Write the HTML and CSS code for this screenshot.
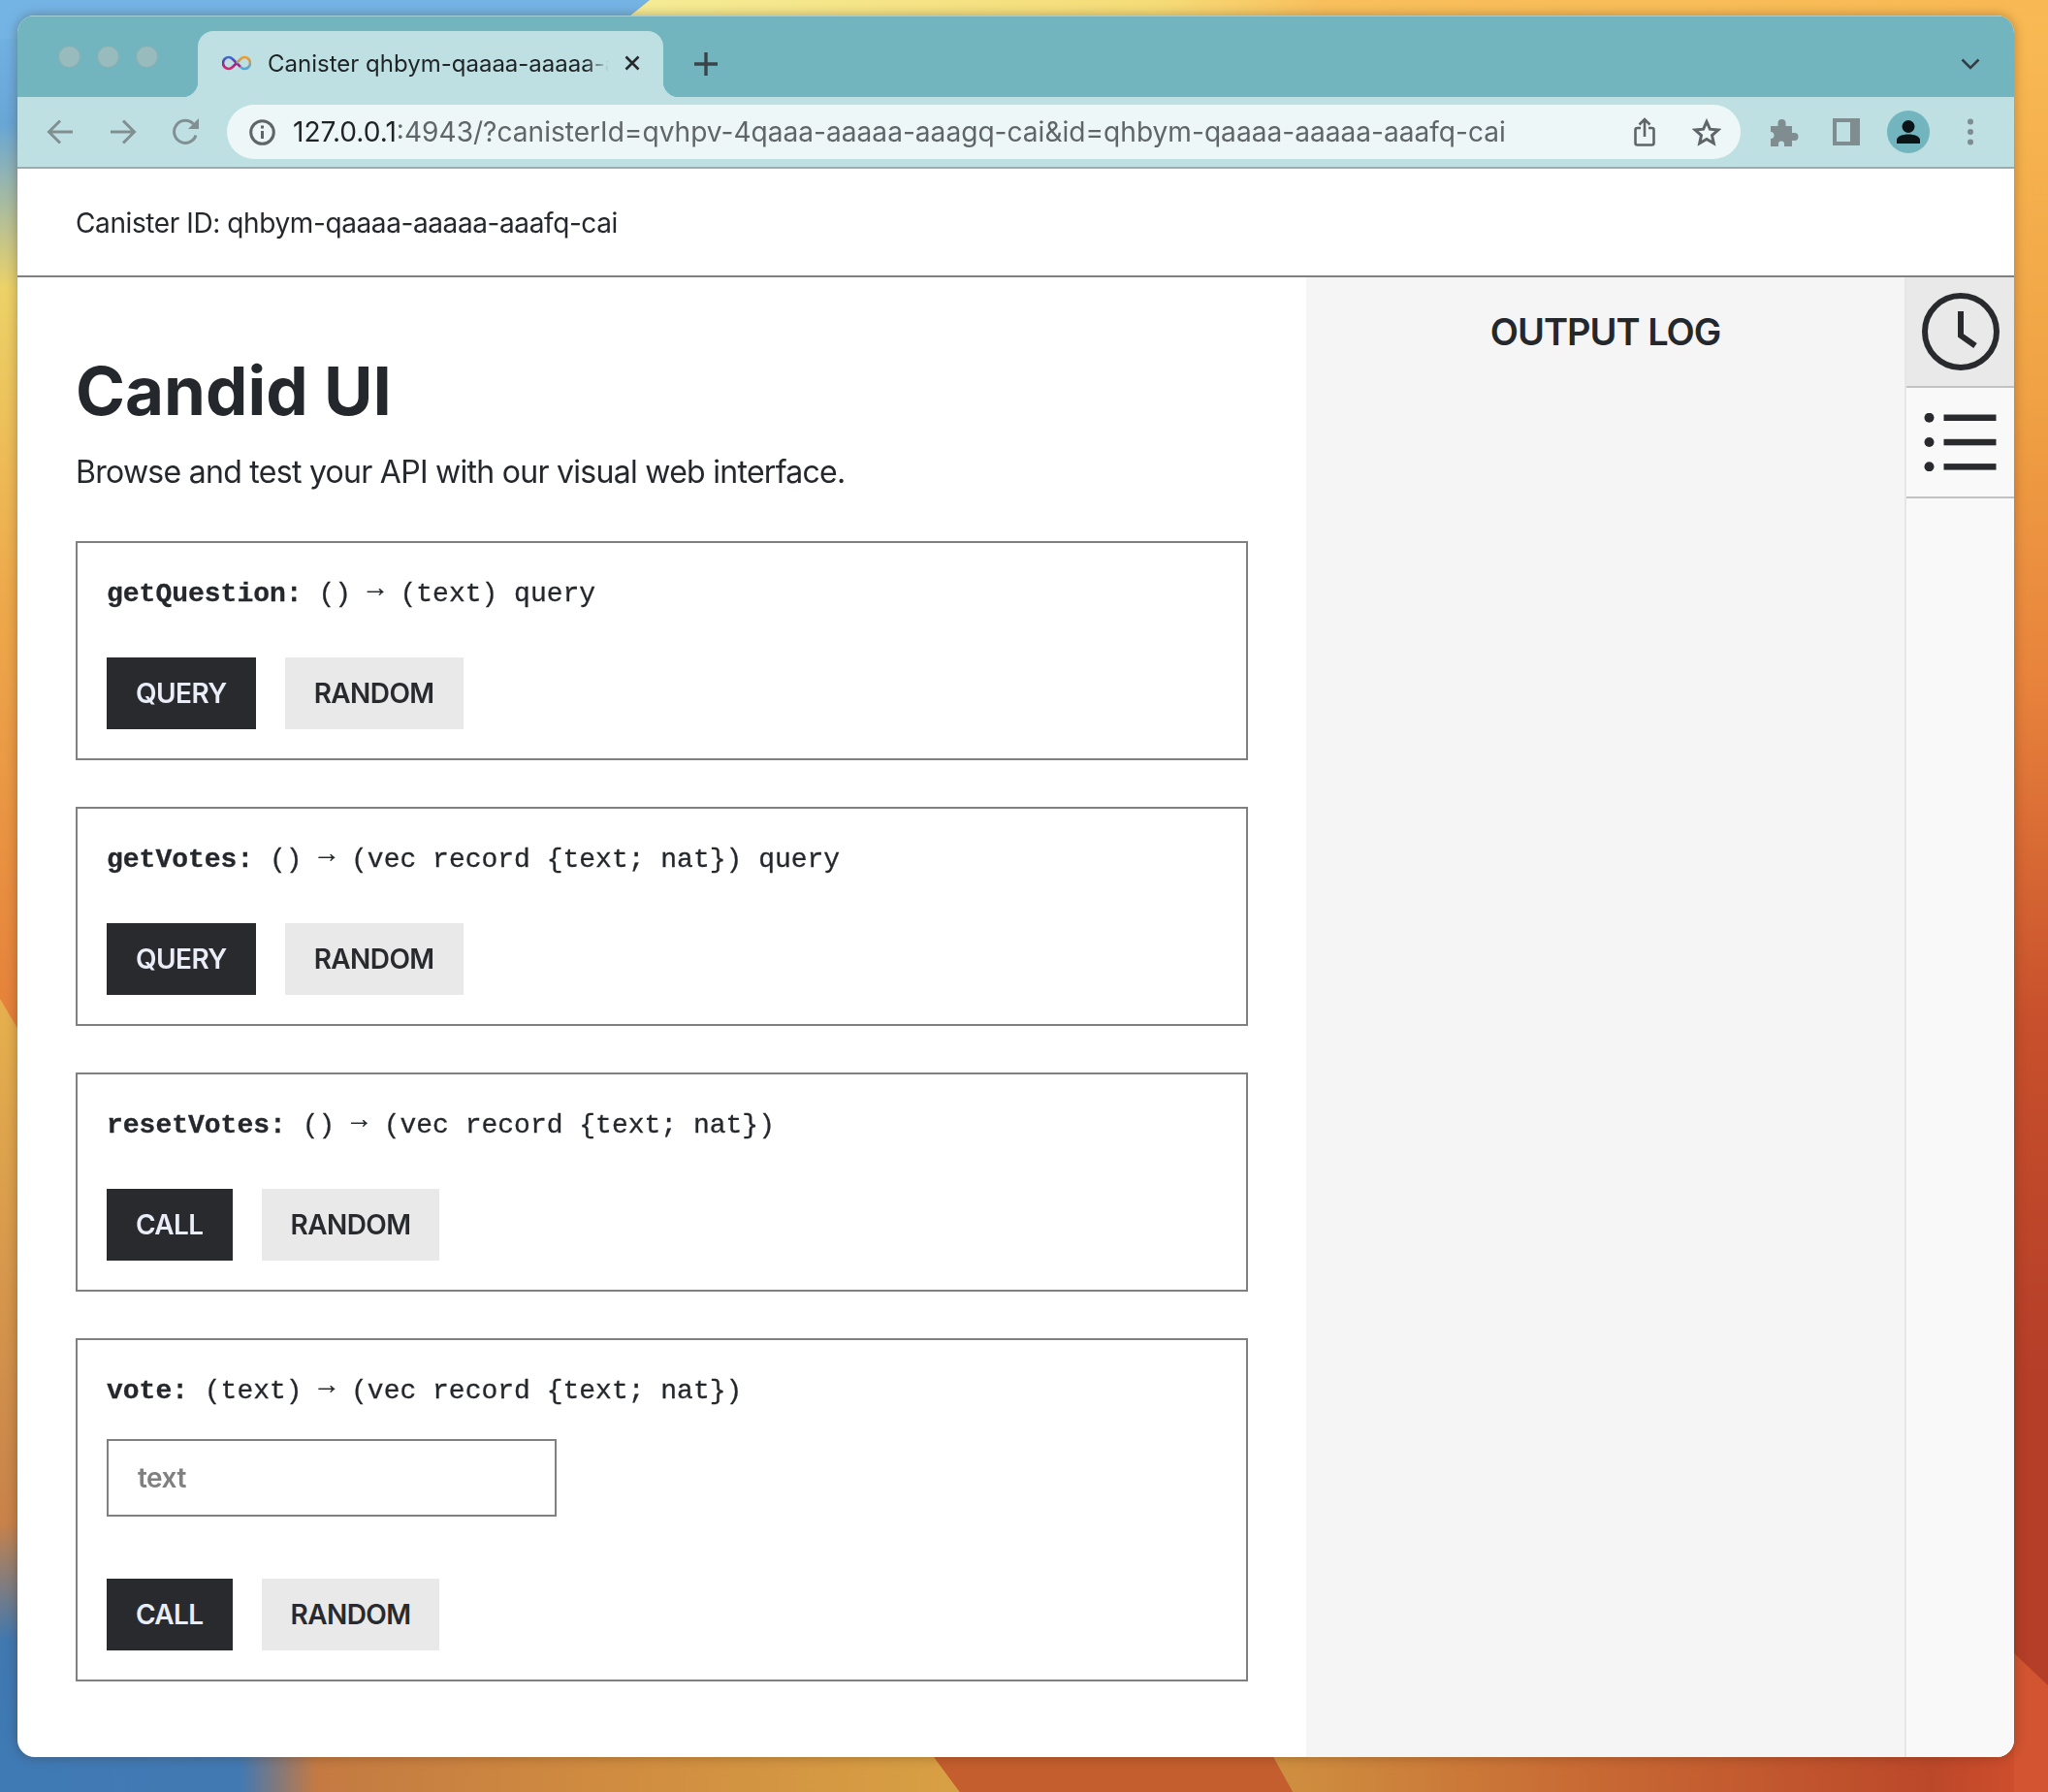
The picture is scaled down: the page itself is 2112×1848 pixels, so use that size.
FILE: index.html
```html
<!DOCTYPE html>
<html lang="en">

<head>
  <meta charset="UTF-8">
  <title>Candid UI</title>
  <link rel="stylesheet" href="styles.css">
</head>

<body>
  <svg class="wallpaper" width="2112" height="1848" viewBox="0 0 2112 1848">
    <defs>
      <linearGradient id="wpRight" gradientUnits="userSpaceOnUse" x1="0" y1="0" x2="0" y2="1848">
        <stop offset="0" stop-color="#f9bb55" />
        <stop offset="0.22" stop-color="#f0a244" />
        <stop offset="0.38" stop-color="#e8833c" />
        <stop offset="0.57" stop-color="#c8502c" />
        <stop offset="0.77" stop-color="#b43e28" />
        <stop offset="1" stop-color="#b43e28" />
      </linearGradient>
      <linearGradient id="wpTop" gradientUnits="userSpaceOnUse" x1="650" y1="0" x2="2112" y2="0">
        <stop offset="0" stop-color="#f5ec96" />
        <stop offset="0.37" stop-color="#f5dc78" />
        <stop offset="0.49" stop-color="#f8bf5c" />
        <stop offset="1" stop-color="#f8b954" />
      </linearGradient>
      <linearGradient id="wpLeftUp" gradientUnits="userSpaceOnUse" x1="0" y1="0" x2="0" y2="1062">
        <stop offset="0" stop-color="#74b6e6" />
        <stop offset="0.12" stop-color="#68a6d6" />
        <stop offset="0.28" stop-color="#ecd268" />
        <stop offset="0.57" stop-color="#eeaa4c" />
        <stop offset="1" stop-color="#e5803a" />
      </linearGradient>
      <linearGradient id="wpLeftDown" gradientUnits="userSpaceOnUse" x1="0" y1="1030" x2="0" y2="1848">
        <stop offset="0" stop-color="#e6b04e" />
        <stop offset="0.66" stop-color="#c8824a" />
        <stop offset="0.81" stop-color="#4078b0" />
        <stop offset="1" stop-color="#3f7ab5" />
      </linearGradient>
      <linearGradient id="wpBottomA" gradientUnits="userSpaceOnUse" x1="0" y1="0" x2="990" y2="0">
        <stop offset="0" stop-color="#3f7ab5" />
        <stop offset="0.25" stop-color="#4279b2" />
        <stop offset="0.33" stop-color="#c47a42" />
        <stop offset="0.6" stop-color="#cf8a40" />
        <stop offset="1" stop-color="#d8a044" />
      </linearGradient>
      <linearGradient id="wpBottomC" gradientUnits="userSpaceOnUse" x1="1313" y1="0" x2="2112" y2="0">
        <stop offset="0" stop-color="#cf9040" />
        <stop offset="0.4" stop-color="#c86a34" />
        <stop offset="0.85" stop-color="#bc482a" />
        <stop offset="1" stop-color="#d4502e" />
      </linearGradient>
    </defs>
    <rect width="2112" height="1848" fill="url(#wpRight)" />
    <polygon points="670,0 2112,0 2112,16 650,16" fill="url(#wpTop)" />
    <rect x="0" y="0" width="40" height="1062" fill="url(#wpLeftUp)" />
    <polygon points="0,0 670,0 650,16 40,16 40,40 0,40" fill="#74b4e4" />
    <polygon points="0,1030 40,1098 40,1848 0,1848" fill="url(#wpLeftDown)" />
    <polygon points="0,1790 947,1790 990,1848 0,1848" fill="url(#wpBottomA)" />
    <polygon points="947,1790 1301,1790 1333,1848 990,1848" fill="#c45e2e" />
    <polygon points="1301,1790 2112,1790 2112,1848 1333,1848" fill="url(#wpBottomC)" />
    <polygon points="2077,1705 2112,1738 2112,1848 2077,1848" fill="#d25430" />
  </svg>

  <div class="window">
    <div class="tabstrip">
      <div class="lights"><span></span><span></span><span></span></div>
      <div class="tab">
        <svg class="favicon" width="30" height="16" viewBox="0 0 30 16" fill="none" stroke-width="2.600">
          <defs>
            <linearGradient id="infL" gradientUnits="userSpaceOnUse" x1="0" y1="2" x2="0" y2="14">
              <stop offset="0" stop-color="#3b6fd0" />
              <stop offset="0.5" stop-color="#7a2a9a" />
              <stop offset="1" stop-color="#e0246e" />
            </linearGradient>
            <linearGradient id="infR" gradientUnits="userSpaceOnUse" x1="0" y1="2" x2="0" y2="14">
              <stop offset="0" stop-color="#f39a2c" />
              <stop offset="1" stop-color="#4aa8e0" />
            </linearGradient>
          </defs>
          <path stroke="url(#infL)" d="M19 12L11 4C10 3 8.500 2 7 2a6 6 0 0 0 0 12c1.500 0 3-1 4-2l4-4" />
          <path stroke="url(#infR)" d="M15 8l4-4c1-1 2.500-2 4-2a6 6 0 0 1 0 12c-1.500 0-3-1-4-2" />
        </svg>
        <span class="tab-title">Canister qhbym-qaaaa-aaaaa-a</span>
        <svg class="tab-close" width="16" height="16" viewBox="0 0 16 16" stroke="#26282c" stroke-width="2.600">
          <path d="M1.500 1.500l13 13M14.500 1.500l-13 13" />
        </svg>
      </div>
      <svg class="new-tab" width="24" height="24" viewBox="0 0 24 24" stroke="#3a4448" stroke-width="3.400">
        <path d="M12 0v24M0 12h24" />
      </svg>
      <svg class="tab-menu" width="20" height="12" viewBox="0 0 20 12" fill="none" stroke="#343e42" stroke-width="2.600">
        <path d="M1.500 1.500l8.500 8.500 8.500-8.500" />
      </svg>
    </div>

    <div class="toolbar">
      <div class="nav-icons">
        <svg width="28" height="26" viewBox="0 0 28 26" fill="none" stroke="#828f92" stroke-width="3">
          <path d="M27 13H3M14 1.500L2.500 13 14 24.500" />
        </svg>
        <svg width="28" height="26" viewBox="0 0 28 26" fill="none" stroke="#828f92" stroke-width="3">
          <path d="M1 13h24M14 1.500L25.500 13 14 24.500" />
        </svg>
        <svg width="28" height="28" viewBox="0 0 28 28" fill="none" stroke="#828f92" stroke-width="3">
          <path d="M24 17.500A11.500 11.500 0 1 1 21.500 6" />
          <path d="M27 0v11H16z" fill="#828f92" stroke="none" />
        </svg>
      </div>
      <div class="omnibox">
        <svg class="info" width="27" height="27" viewBox="0 0 27 27" fill="none" stroke="#5f6569" stroke-width="3">
          <circle cx="13.500" cy="13.500" r="11.800" />
          <path d="M13.500 12v8" />
          <path d="M13.500 6.500v3" />
        </svg>
        <div class="url"><b>127.0.0.1</b>:4943/?canisterId=qvhpv-4qaaa-aaaaa-aaagq-cai&amp;id=qhbym-qaaaa-aaaaa-aaafq-cai</div>
        <svg width="22" height="30" viewBox="0 0 22 30" fill="none" stroke="#5f6569" stroke-width="2.600">
          <path d="M7 11H3.500a2 2 0 0 0-2 2v13.500a2 2 0 0 0 2 2h15a2 2 0 0 0 2-2V13a2 2 0 0 0-2-2H15" />
          <path d="M11 20V2M5.500 7.500L11 2l5.500 5.500" />
        </svg>
        <svg class="star" width="30" height="29" viewBox="0 0 30 29" fill="none" stroke="#5f6569" stroke-width="3">
          <path d="M15 3.500l3.400 7.700 8.400.8-6.300 5.600 1.800 8.200L15 21.500l-7.300 4.300 1.800-8.200-6.300-5.600 8.400-.8z" />
        </svg>
      </div>
      <div class="tool-icons">
        <svg class="ext" width="29" height="29" viewBox="0 0 29 29" fill="#7f8c90">
          <path d="M0 8h7.500V5a4 4 0 0 1 8 0v3H22v7h2.500a4 4 0 0 1 0 8H22v6h-8v-2.500a3 3 0 0 0-6 0V29H0v-8a3.500 3.500 0 0 0 0-7z" />
        </svg>
        <svg class="panel" width="28" height="28" viewBox="0 0 28 28">
          <path fill="#7f8c90" fill-rule="evenodd" d="M0 0h28v28H0zM4 4v20h14V4z" />
        </svg>
        <div class="avatar">
          <svg width="24" height="24" viewBox="0 0 24 24" fill="#0b1416">
            <circle cx="12" cy="6.500" r="6.500" />
            <path d="M0 24v-3.500C0 16.500 6 14.500 12 14.500s12 2 12 6V24z" />
          </svg>
        </div>
        <svg class="more" width="8" height="28" viewBox="0 0 8 28" fill="#7f8c90">
          <circle cx="4" cy="3.500" r="3" />
          <circle cx="4" cy="14" r="3" />
          <circle cx="4" cy="24.500" r="3" />
        </svg>
      </div>
    </div>

    <header class="page-header">Canister ID: qhbym-qaaaa-aaaaa-aaafq-cai</header>

    <div class="page">
      <main class="main">
        <h1>Candid UI</h1>
        <p class="lead">Browse and test your API with our visual web interface.</p>

        <section class="method">
          <div class="sig"><b>getQuestion:</b> () <span class="arrow">→</span> (text) query</div>
          <div class="buttons">
            <button class="btn primary">QUERY</button>
            <button class="btn">RANDOM</button>
          </div>
        </section>

        <section class="method">
          <div class="sig"><b>getVotes:</b> () <span class="arrow">→</span> (vec record {text; nat}) query</div>
          <div class="buttons">
            <button class="btn primary">QUERY</button>
            <button class="btn">RANDOM</button>
          </div>
        </section>

        <section class="method">
          <div class="sig"><b>resetVotes:</b> () <span class="arrow">→</span> (vec record {text; nat})</div>
          <div class="buttons">
            <button class="btn primary">CALL</button>
            <button class="btn">RANDOM</button>
          </div>
        </section>

        <section class="method">
          <div class="sig"><b>vote:</b> (text) <span class="arrow">→</span> (vec record {text; nat})</div>
          <input class="arg" type="text" placeholder="text">
          <div class="buttons with-arg">
            <button class="btn primary">CALL</button>
            <button class="btn">RANDOM</button>
          </div>
        </section>
      </main>

      <aside class="log">
        <h2>OUTPUT LOG</h2>
      </aside>

      <nav class="side">
        <div class="side-item active">
          <svg width="80" height="80" viewBox="0 0 80 80" fill="none" stroke="#292a2e" stroke-width="6">
            <circle cx="40" cy="40" r="37" />
            <path d="M40 19v25l15 10.500" />
          </svg>
        </div>
        <div class="side-item">
          <svg width="75" height="60" viewBox="0 0 75 60" fill="#292a2e">
            <circle cx="5.500" cy="4.700" r="5" />
            <circle cx="5.500" cy="30" r="5" />
            <circle cx="5.500" cy="55.300" r="5" />
            <rect x="20.500" y="1.500" width="54" height="6.500" />
            <rect x="20.500" y="26.800" width="54" height="6.500" />
            <rect x="20.500" y="52.100" width="54" height="6.500" />
          </svg>
        </div>
      </nav>
    </div>
  </div>
</body>

</html>
```

FILE: styles.css
```css
* {
  box-sizing: border-box;
}

html,
body {
  height: 100%;
}

body {
  margin: 0;
  padding: 16px 35px 36px 18px;
  overflow: hidden;
  font-family: Inter, "Noto Sans", sans-serif;
  color: #24272b;
}

.wallpaper {
  position: fixed;
  left: 0;
  top: 0;
  z-index: -1;
}

.window {
  display: flex;
  flex-direction: column;
  height: 100%;
  border-radius: 18px;
  overflow: hidden;
  background: #fff;
  box-shadow: 0 0 12px rgba(60, 30, 0, 0.35);
}

/* browser chrome */

.tabstrip {
  display: flex;
  align-items: flex-end;
  flex: none;
  height: 84px;
  padding-left: 186px;
  background: #72b5bf;
  box-shadow: inset 0 1px 0 rgba(255, 255, 255, 0.35);
  position: relative;
}

.lights {
  display: flex;
  gap: 17px;
  position: absolute;
  left: 42px;
  top: 31px;
}

.lights span {
  width: 23px;
  height: 23px;
  border-radius: 50%;
  background: #98bbbd;
  border: 1px solid #8aafb2;
}

.tab {
  display: flex;
  align-items: center;
  width: 480px;
  height: 68px;
  padding: 0 24px 2px 25px;
  border-radius: 16px 16px 0 0;
  background: #bee0e2;
  position: relative;
}

.tab::before,
.tab::after {
  content: "";
  position: absolute;
  bottom: 0;
  width: 16px;
  height: 16px;
}

.tab::before {
  left: -16px;
  background: radial-gradient(circle at 0 0, transparent 16px, #bee0e2 16.500px);
}

.tab::after {
  right: -16px;
  background: radial-gradient(circle at 100% 0, transparent 16px, #bee0e2 16.500px);
}

.favicon {
  flex: none;
  margin-right: 17px;
}

.tab-title {
  flex: 1;
  min-width: 0;
  white-space: nowrap;
  font-size: 24px;
  color: #1f2326;
  -webkit-mask-image: linear-gradient(to left, transparent 0, #000 24px);
  mask-image: linear-gradient(to left, transparent 0, #000 24px);
}

.tab-close {
  flex: none;
  margin-left: 16px;
}

.new-tab {
  margin: 0 0 22px 32px;
}

.tab-menu {
  margin: 0 35px 28px auto;
}

.toolbar {
  display: flex;
  align-items: center;
  flex: none;
  height: 74px;
  padding-left: 30px;
  background: #bee0e2;
  border-bottom: 2px solid #95adb3;
}

.nav-icons {
  display: flex;
  align-items: center;
  gap: 37px;
}

.omnibox {
  display: flex;
  align-items: center;
  width: 1561px;
  height: 56px;
  margin-left: 28px;
  padding: 0 20px 0 23px;
  border-radius: 28px;
  background: #edf7f8;
}

.url {
  flex: 1;
  margin-left: 18px;
  font-size: 28.100px;
  color: #5f6569;
  white-space: nowrap;
}

.url b {
  font-weight: 400;
  color: #1f2326;
}

.star {
  margin-left: 38px;
}

.tool-icons {
  display: flex;
  align-items: center;
  margin-left: 31px;
}

.panel {
  margin-left: 35px;
}

.avatar {
  display: flex;
  align-items: flex-end;
  justify-content: center;
  width: 44px;
  height: 44px;
  margin-left: 28px;
  padding-bottom: 10px;
  border-radius: 50%;
  background: #72b5bf;
}

.more {
  margin-left: 38px;
}

/* page */

.page-header {
  flex: none;
  height: 112px;
  padding: 39px 60px 0;
  font-size: 28px;
  letter-spacing: -0.4px;
  border-bottom: 2px solid #808080;
}

.page {
  display: flex;
  flex: 1;
  min-height: 0;
}

.main {
  flex: none;
  width: 1329px;
  padding: 0 60px;
}

h1 {
  margin: 81px 0 0;
  font-size: 69px;
  line-height: 72px;
  font-weight: 700;
}

.lead {
  margin: 28px 0 0;
  font-size: 32px;
  line-height: 40px;
  letter-spacing: -0.72px;
}

.method {
  margin-top: 48px;
  padding: 34px 30px 30px;
  border: 2px solid #808080;
}

.lead + .method {
  margin-top: 51px;
}

.sig {
  height: 36px;
  font-family: "Liberation Mono", monospace;
  font-size: 28px;
  line-height: 36px;
  color: #24272b;
  -webkit-text-stroke: 0.3px #24272b;
}

.arrow {
  vertical-align: 5px;
  line-height: 1;
}

.buttons {
  display: flex;
  gap: 30px;
  margin-top: 48px;
}

.buttons.with-arg {
  margin-top: 64px;
}

.btn {
  height: 74px;
  padding: 0 30px;
  border: none;
  border-radius: 0;
  font-family: inherit;
  font-size: 28px;
  font-weight: 600;
  letter-spacing: -0.6px;
  color: #292a2e;
  background: #e9e9e9;
}

.btn.primary {
  color: #e9edf7;
  background: #292a2e;
}

.arg {
  display: block;
  width: 464px;
  height: 80px;
  margin-top: 32px;
  padding: 0 30px;
  border: 2px solid #808080;
  border-radius: 0;
  font-family: inherit;
  font-size: 28px;
  font-weight: 600;
  letter-spacing: -0.5px;
  color: #292a2e;
}

.arg::placeholder {
  color: #808080;
  opacity: 1;
}

.log {
  flex: 1;
  background: #f5f5f5;
}

h2 {
  margin: 32px 0 0;
  font-size: 38px;
  line-height: 48px;
  font-weight: 600;
  letter-spacing: -1px;
  text-align: center;
}

.side {
  flex: none;
  width: 113px;
  background: #f9f9f9;
  border-left: 2px solid #e6e6e6;
}

.side-item {
  display: flex;
  align-items: center;
  justify-content: center;
  height: 114px;
  border-bottom: 2px solid #c2c2c2;
}

.side-item.active {
  background: #e9e9e9;
}
```
